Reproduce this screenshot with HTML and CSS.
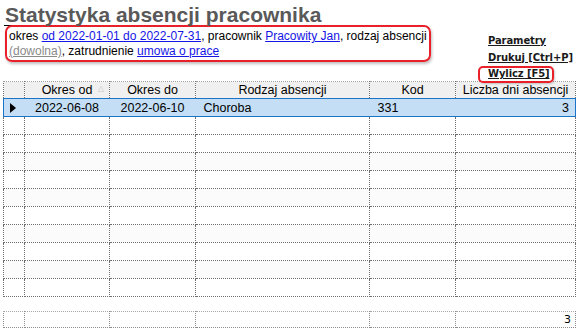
FILE: index.html
```html
<!DOCTYPE html>
<html lang="pl">
<head>
    <meta charset="UTF-8">
    <title>Statystyka absencji pracownika</title>
    <link rel="stylesheet" href="styles.css">
</head>
<body>
    <div class="top">
        <div class="head">
            <h1 class="title">Statystyka absencji pracownika</h1>
            <div class="rule"></div>
            <div class="filter">
                okres <a href="#">od 2022-01-01 do 2022-07-31</a>, pracownik <a href="#">Pracowity Jan</a>, rodzaj absencji
                <a href="#" class="muted">(dowolna)</a>, zatrudnienie <a href="#">umowa o prace</a>
            </div>
        </div>
        <div class="actions">
            <a href="#">Parametry</a>
            <a href="#">Drukuj [Ctrl+P]</a>
            <a href="#" class="marked">Wylicz [F5]</a>
        </div>
    </div>

    <table class="grid">
        <colgroup>
            <col class="c-ind"><col class="c-od"><col class="c-do"><col class="c-rodz"><col class="c-kod"><col class="c-dni">
        </colgroup>
        <thead>
            <tr>
                <th></th>
                <th class="sorted">Okres od<span class="sort">&#9651;</span></th>
                <th>Okres do</th>
                <th>Rodzaj absencji</th>
                <th>Kod</th>
                <th>Liczba dni absencji</th>
            </tr>
        </thead>
        <tbody>
            <tr class="selected">
                <td class="ind"><span class="arrow"></span></td>
                <td class="center">2022-06-08</td>
                <td class="center">2022-06-10</td>
                <td>Choroba</td>
                <td>331</td>
                <td class="num">3</td>
            </tr>
            <tr><td></td><td></td><td></td><td></td><td></td><td></td></tr>
            <tr><td></td><td></td><td></td><td></td><td></td><td></td></tr>
            <tr class="alt"><td></td><td></td><td></td><td></td><td></td><td></td></tr>
            <tr><td></td><td></td><td></td><td></td><td></td><td></td></tr>
            <tr class="alt"><td></td><td></td><td></td><td></td><td></td><td></td></tr>
            <tr><td></td><td></td><td></td><td></td><td></td><td></td></tr>
            <tr class="alt"><td></td><td></td><td></td><td></td><td></td><td></td></tr>
            <tr><td></td><td></td><td></td><td></td><td></td><td></td></tr>
            <tr class="alt"><td></td><td></td><td></td><td></td><td></td><td></td></tr>
            <tr><td></td><td></td><td></td><td></td><td></td><td></td></tr>
        </tbody>
    </table>

    <table class="grid totals">
        <colgroup>
            <col class="c-ind"><col class="c-od"><col class="c-do"><col class="c-rodz"><col class="c-kod"><col class="c-dni">
        </colgroup>
        <tr>
            <td></td><td></td><td></td><td></td><td></td>
            <td class="num">3</td>
        </tr>
    </table>
</body>
</html>
```

FILE: styles.css
```css
body {
    margin: 0;
    background: #fff;
    font-family: "Liberation Sans", Arial, sans-serif;
    color: #000;
}
.top {
    display: flex;
    height: 81px;
}
.head {
    width: 478px;
}
.title {
    margin: 0;
    padding: 4px 0 0 5px;
    font-size: 21px;
    line-height: 21px;
    font-weight: bold;
    color: #595959;
}
.rule {
    width: 12px;
    height: 1px;
    margin-left: 4px;
    background: #000;
}
.filter {
    box-sizing: border-box;
    width: 426px;
    margin: -1px 0 0 5px;
    padding: 2px 2px 1px;
    border: 2px solid #e8202a;
    border-radius: 7px;
    box-shadow: 1px 2px 3px rgba(0,0,0,0.25);
    font-size: 12px;
    line-height: 15px;
}
.filter a {
    color: #1515e6;
}
.filter a.muted {
    color: #8a8a8a;
}
.actions {
    display: flex;
    flex-direction: column;
    align-items: flex-start;
    padding-top: 33px;
}
.actions a {
    padding: 0 3px 0 8px;
    border: 2px solid transparent;
    border-radius: 5px;
    font-family: "DejaVu Sans", Verdana, sans-serif;
    font-size: 10px;
    font-weight: bold;
    line-height: 12.5px;
    color: #1a1a1a;
    letter-spacing: -0.1px;
}
.actions a.marked {
    border-color: #e8202a;
    box-shadow: 1px 1px 2px rgba(0,0,0,0.2);
}

/* siatka */
.grid {
    margin-left: 3px;
    width: 573px;
    table-layout: fixed;
    border-collapse: collapse;
    font-size: 12.5px;
}
.c-ind { width: 21px; }
.c-od { width: 85px; }
.c-do { width: 86px; }
.c-rodz { width: 174px; }
.c-kod { width: 86px; }
.c-dni { width: 120px; }
.grid th,
.grid td {
    height: 17px;
    padding: 0;
    border: 1px dotted #6e6e6e;
    white-space: nowrap;
    overflow: hidden;
}
.grid th {
    height: 16px;
    background: #f0f0f0;
    font-weight: normal;
    text-align: center;
    border-top-color: #a0a0a0;
}
.grid th.sorted {
    position: relative;
}
.sort {
    position: absolute;
    right: 5px;
    top: 2px;
    font-size: 8px;
    color: #c8c8c8;
}
.grid td {
    padding-left: 8px;
}
.grid td.center {
    padding-left: 0;
    text-align: center;
}
.grid td.num {
    padding: 0 6px 0 0;
    text-align: right;
}
.grid tr.alt td {
    background: #fbfbfb;
}
.grid tr.selected td {
    background: #c4def5;
    border-top: 1px solid #1b74c6;
    border-bottom: 1px solid #1b74c6;
    border-left: hidden;
}
.grid tr.selected td:first-child {
    border-left: 1px solid #1b74c6;
}
.grid tr.selected td:last-child {
    border-right: 1px solid #1b74c6;
}
.grid td.ind {
    padding-left: 6px;
}
.arrow {
    display: block;
    width: 0;
    height: 0;
    border-top: 5px solid transparent;
    border-bottom: 5px solid transparent;
    border-left: 6px solid #000;
}
.totals {
    margin-top: 14px;
}
.totals td {
    height: 15px;
    border-color: #8c8c8c;
}
.totals tr td {
    border-top-color: #a8a8a8;
}
.totals td.num {
    font-family: "DejaVu Sans", Tahoma, sans-serif;
    font-size: 11px;
    padding-right: 4px;
}
```
